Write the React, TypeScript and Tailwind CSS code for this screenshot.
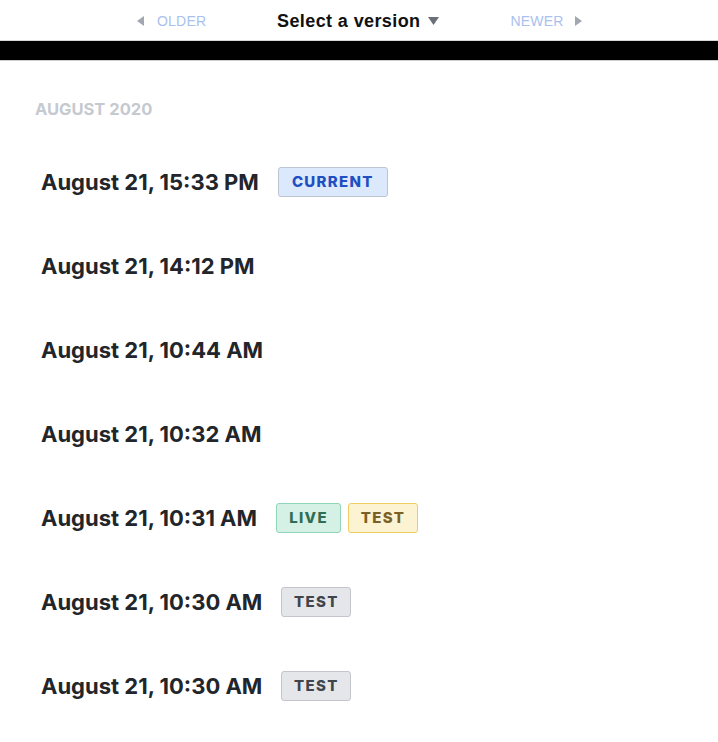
import React from "react";

type Badge = { label: string; cls: string };

const rows: { t: string; badges: Badge[] }[] = [
  { t: "August 21, 15:33 PM", badges: [{ label: "CURRENT", cls: "bg-[#dce8fc] border-[#bcc5d3] text-[#1f4fc0] w-[110px]" }] },
  { t: "August 21, 14:12 PM", badges: [] },
  { t: "August 21, 10:44 AM", badges: [] },
  { t: "August 21, 10:32 AM", badges: [] },
  {
    t: "August 21, 10:31 AM",
    badges: [
      { label: "LIVE", cls: "bg-[#d5f0e5] border-[#8fd6b8] text-[#2f6e55] w-[65px]" },
      { label: "TEST", cls: "bg-[#fcf3d3] border-[#f0cd62] text-[#7a6026] w-[70px]" },
    ],
  },
  { t: "August 21, 10:30 AM", badges: [{ label: "TEST", cls: "bg-[#e4e6ea] border-[#c2c5cb] text-[#40444c] w-[70px]" }] },
  { t: "August 21, 10:30 AM", badges: [{ label: "TEST", cls: "bg-[#e4e6ea] border-[#c2c5cb] text-[#40444c] w-[70px]" }] },
];

export default function App() {
  return (
    <div className="w-[718px] h-[742px] bg-white overflow-hidden" style={{ fontFamily: "Inter, 'Noto Sans', sans-serif" }}>
      <div className="h-[41px] pt-[2px] flex items-center border-b border-[#d8d8d8]" style={{ fontFamily: "'Liberation Sans', Arial, sans-serif" }}>
        <div className="flex items-center ml-[137px] w-[120px]">
          <svg width="8" height="10" viewBox="0 0 8 10" className="mr-[12px]"><path d="M7 0 L0 5 L7 10 Z" fill="#a3a8b0" /></svg>
          <span className="text-[14px] text-[#a9c1ee] tracking-[0.2px]">OLDER</span>
        </div>
        <div className="flex items-center ml-[20px]">
          <span className="text-[18px] font-bold text-[#111] tracking-[0.4px]">Select a version</span>
          <svg width="11" height="8" viewBox="0 0 11 8" className="ml-[8px]"><path d="M0 0 L11 0 L5.5 8 Z" fill="#6b7078" /></svg>
        </div>
        <div className="flex items-center ml-[71px]">
          <span className="text-[14px] text-[#a9c1ee] tracking-[0.2px]">NEWER</span>
          <svg width="8" height="10" viewBox="0 0 8 10" className="ml-[10px]"><path d="M1 0 L8 5 L1 10 Z" fill="#a3a8b0" /></svg>
        </div>
      </div>
      <div className="h-[20px] bg-black border-b border-[#cfcfcf]" />
      <div className="pt-[37px] pl-[35px]">
        <div className="text-[16.5px] font-bold text-[#c5c9d0] leading-[22px]">AUGUST 2020</div>
        <div className="mt-[45px] pl-[6px] flex flex-col gap-[50px]">
          {rows.map((r, i) => (
            <div key={i} className="h-[34px] flex items-center">
              <span className="text-[22px] font-bold text-[#22252a]">{r.t}</span>
              <div className="flex gap-[7px] ml-[19px]">
                {r.badges.map((b, j) => (
                  <span key={j} className={"h-[30px] flex items-center justify-center rounded-[3px] border-[1.5px] text-[15px] font-extrabold tracking-[1.3px] " + b.cls}>
                    {b.label}
                  </span>
                ))}
              </div>
            </div>
          ))}
        </div>
      </div>
    </div>
  );
}
